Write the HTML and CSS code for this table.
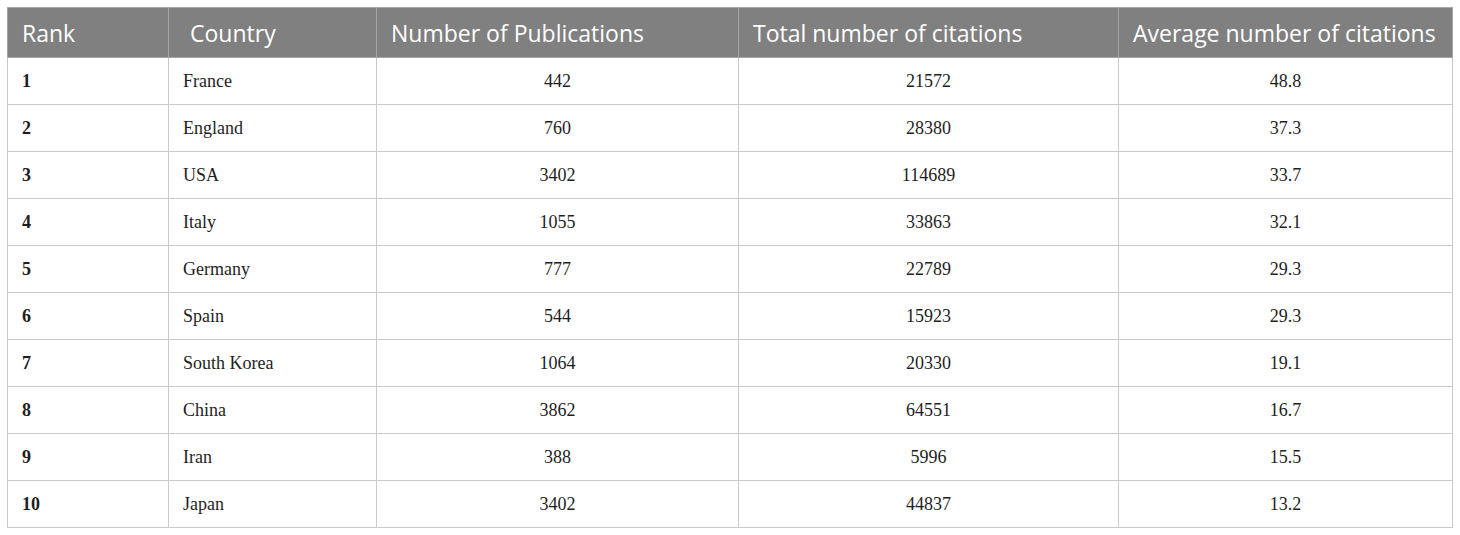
FILE: index.html
```html
<!DOCTYPE html>
<html lang="en">
<head>
  <meta charset="UTF-8" />
  <title>Top 10 countries</title>
  <link rel="stylesheet" href="styles.css">
</head>
<body>
  <table class="rank-table">
    <colgroup>
      <col class="c-rank" />
      <col class="c-country" />
      <col class="c-pubs" />
      <col class="c-total" />
      <col class="c-avg" />
    </colgroup>
    <thead>
      <tr>
        <th>Rank</th>
        <th class="th-country">Country</th>
        <th>Number of Publications</th>
        <th>Total number of citations</th>
        <th>Average number of citations</th>
      </tr>
    </thead>
    <tbody>
      <tr><td class="rank">1</td><td class="country">France</td><td>442</td><td>21572</td><td>48.8</td></tr>
      <tr><td class="rank">2</td><td class="country">England</td><td>760</td><td>28380</td><td>37.3</td></tr>
      <tr><td class="rank">3</td><td class="country">USA</td><td>3402</td><td>114689</td><td>33.7</td></tr>
      <tr><td class="rank">4</td><td class="country">Italy</td><td>1055</td><td>33863</td><td>32.1</td></tr>
      <tr><td class="rank">5</td><td class="country">Germany</td><td>777</td><td>22789</td><td>29.3</td></tr>
      <tr><td class="rank">6</td><td class="country">Spain</td><td>544</td><td>15923</td><td>29.3</td></tr>
      <tr><td class="rank">7</td><td class="country">South Korea</td><td>1064</td><td>20330</td><td>19.1</td></tr>
      <tr><td class="rank">8</td><td class="country">China</td><td>3862</td><td>64551</td><td>16.7</td></tr>
      <tr><td class="rank">9</td><td class="country">Iran</td><td>388</td><td>5996</td><td>15.5</td></tr>
      <tr><td class="rank">10</td><td class="country">Japan</td><td>3402</td><td>44837</td><td>13.2</td></tr>
    </tbody>
  </table>
</body>
</html>
```

FILE: styles.css
```css
body { margin: 7px 7px 8px 7px; background: #fff; }
.rank-table { border-collapse: collapse; width: 1445px; table-layout: fixed; }
.c-rank { width: 161px; }
.c-country { width: 208px; }
.c-pubs { width: 362px; }
.c-total { width: 380px; }
.c-avg { width: 334px; }
.rank-table th, .rank-table td { border: 1px solid #c9c9c9; }
.rank-table th {
  background: #808080; color: #fff; text-align: left; font-weight: normal;
  font-family: "Open Sans", sans-serif; font-size: 23px; height: 49px;
  padding: 0 14px; white-space: nowrap; border-color: #a6a6a6;
}
.rank-table th.th-country { padding-left: 21px; }
.rank-table td {
  font-family: "Liberation Serif", serif; font-size: 18px; color: #1e1e1e;
  text-align: center; height: 46px; padding: 0 14px;
}
.rank-table td.rank { text-align: left; font-weight: bold; }
.rank-table td.country { text-align: left; }
```
